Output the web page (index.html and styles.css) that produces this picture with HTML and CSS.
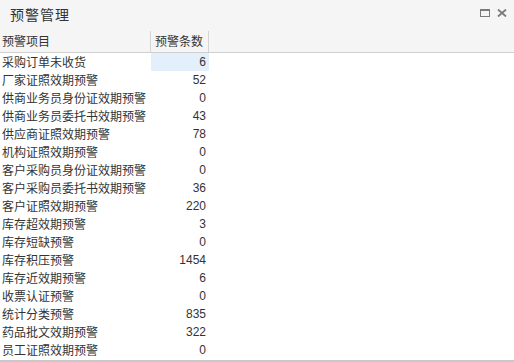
FILE: index.html
```html
<!DOCTYPE html>
<html lang="zh-CN">
<head>
  <meta charset="UTF-8">
  <title>预警管理</title>
  <link rel="stylesheet" href="styles.css">
</head>
<body>
  <div class="panel">
    <!-- 标题栏 -->
    <div class="panel-header">
      <span class="panel-title">预警管理</span>
      <div class="panel-tools">
        <svg class="tool" width="10" height="8" viewBox="0 0 10 8">
          <rect x="0.5" y="0.5" width="9" height="7" fill="none" stroke="#7a7a7a" stroke-width="1"/>
          <rect x="0" y="0" width="10" height="2" fill="#7a7a7a"/>
        </svg>
        <svg class="tool" width="10" height="8" viewBox="0 0 10 8">
          <path d="M1 0.5 L9 7.5 M9 0.5 L1 7.5" stroke="#7a7a7a" stroke-width="1.8"/>
        </svg>
      </div>
    </div>

    <!-- 表格 -->
    <div class="grid">
      <div class="grid-head">
        <div class="cell col-name">预警项目</div>
        <div class="cell col-num">预警条数</div>
      </div>
      <div class="grid-body" id="grid-body"></div>
    </div>
  </div>

  <script>
    const datos = [
      ["采购订单未收货", 6],
      ["厂家证照效期预警", 52],
      ["供商业务员身份证效期预警", 0],
      ["供商业务员委托书效期预警", 43],
      ["供应商证照效期预警", 78],
      ["机构证照效期预警", 0],
      ["客户采购员身份证效期预警", 0],
      ["客户采购员委托书效期预警", 36],
      ["客户证照效期预警", 220],
      ["库存超效期预警", 3],
      ["库存短缺预警", 0],
      ["库存积压预警", 1454],
      ["库存近效期预警", 6],
      ["收票认证预警", 0],
      ["统计分类预警", 835],
      ["药品批文效期预警", 322],
      ["员工证照效期预警", 0]
    ];

    const body = document.getElementById("grid-body");
    datos.forEach((d, i) => {
      const row = document.createElement("div");
      row.className = "grid-row";
      row.innerHTML = `<div class="cell col-name">${d[0]}</div>` +
        `<div class="cell col-num num${i === 0 ? " selected" : ""}">${d[1]}</div>`;
      body.appendChild(row);
    });
  </script>
</body>
</html>
```

FILE: styles.css
```css
body {
  margin: 0;
  padding: 0;
  background: #ffffff;
  font-family: "Liberation Sans", "Noto Sans CJK SC", sans-serif;
  color: #333;
}

.panel {
  width: 514px;
  height: 362px;
  display: flex;
  flex-direction: column;
  overflow: hidden;
}

.panel-header {
  height: 30px;
  background: #f5f5f5;
  display: flex;
  align-items: center;
  justify-content: space-between;
  padding: 0 7px 0 10px;
  box-sizing: border-box;
}

.panel-title {
  font-family: "Noto Sans CJK SC", sans-serif;
  font-size: 14px;
  letter-spacing: 1px;
  color: #333;
  margin-top: -2px;
}

.panel-tools {
  display: flex;
  gap: 7px;
  margin-top: -4px;
}

.tool {
  display: block;
}

.grid {
  flex: 1;
  display: flex;
  flex-direction: column;
  border-bottom: 2px solid #c8c8c8;
}

.grid-head {
  display: flex;
  height: 23px;
  background: #f5f5f5;
  border-bottom: 1px solid #cfcfcf;
  box-sizing: border-box;
  align-items: flex-end;
}

.grid-head .cell {
  height: 21px;
  line-height: 20px;
  border-right: 1px solid #d4d4d4;
  box-sizing: border-box;
}

.grid-head .col-num {
  text-align: left;
  padding-left: 4px;
}

.grid-body {
  flex: 1;
}

.grid-row {
  display: flex;
  height: 18px;
}

.cell {
  font-family: "Noto Sans CJK SC", sans-serif;
  font-size: 12px;
  line-height: 18px;
  white-space: nowrap;
  overflow: hidden;
}

.col-name {
  width: 151px;
  padding-left: 2px;
  box-sizing: border-box;
}

.col-num {
  width: 58px;
  text-align: right;
  padding-right: 3px;
  box-sizing: border-box;
}

.num {
  font-family: "Liberation Sans", sans-serif;
  font-size: 12px;
}

.selected {
  background: #e3effa;
}
```
